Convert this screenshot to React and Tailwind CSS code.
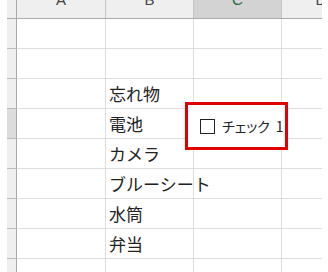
const cols = ["A", "B", "C", "D"]
const rows = ["", "", "忘れ物", "電池", "カメラ", "ブルーシート", "水筒", "弁当", ""]
const widths = ["w-[89px]", "w-[88px]", "w-[88px]", "w-[78px]"]

const jp = "[font-family:'Noto_Sans_CJK_JP','Noto_Sans',sans-serif]"

export default function App() {
  return (
    <div className="relative h-[272px] w-[328px] overflow-hidden bg-white">
      <div className="ml-[7px] w-[315px] overflow-hidden">
        {/* column headers, scrolled so only their lower part shows */}
        <div className="flex h-[19px] w-max border-b border-[#a9a9a9] bg-[#efefef]">
          <div className="w-[10px] border-r border-[#a9a9a9]" />
          {cols.map((c, i) => (
            <div
              key={c}
              className={`${widths[i]} flex shrink-0 justify-center overflow-hidden ${i < 3 ? "border-r border-[#c6c6c6]" : ""} ${c === "C" ? "bg-[#d3d3d3] text-[#1e6b41]" : "text-[#444]"}`}
            >
              <span className="-mt-[9px] text-[15px] leading-[18px] [font-family:'Liberation_Sans',sans-serif]">{c}</span>
            </div>
          ))}
        </div>

        {rows.map((text, r) => (
          <div key={r} className="flex h-[30px] w-max">
            <div
              className={`w-[10px] shrink-0 border-r border-b border-r-[#a9a9a9] border-b-[#bdbdbd] ${r === 3 ? "bg-[#dcdcdc]" : "bg-[#efefef]"}`}
            />
            {cols.map((c, i) => (
              <div
                key={c}
                className={`${widths[i]} flex shrink-0 items-center whitespace-nowrap border-b border-[#dedede] ${i < 3 ? "border-r" : ""} ${i === 1 ? "z-10" : ""}`}
              >
                {i === 1 && text && (
                  <span className={`pl-[3px] text-[17px] leading-none text-[#222] ${jp}`}>{text}</span>
                )}
              </div>
            ))}
          </div>
        ))}
      </div>

      {/* form control checkbox, highlighted */}
      <div className="absolute left-[185px] top-[102px] z-20 flex h-[48px] w-[103px] items-center border-[3px] border-[#e00000] bg-white pl-[12px]">
        <span className="h-[15px] w-[15px] shrink-0 border border-[#222] bg-white" />
        <span className={`ml-[7px] whitespace-nowrap text-[14px] leading-none text-[#222] [font-feature-settings:'palt'] ${jp}`}>
          チェック<span className="ml-[6px]">1</span>
        </span>
      </div>
    </div>
  )
}
